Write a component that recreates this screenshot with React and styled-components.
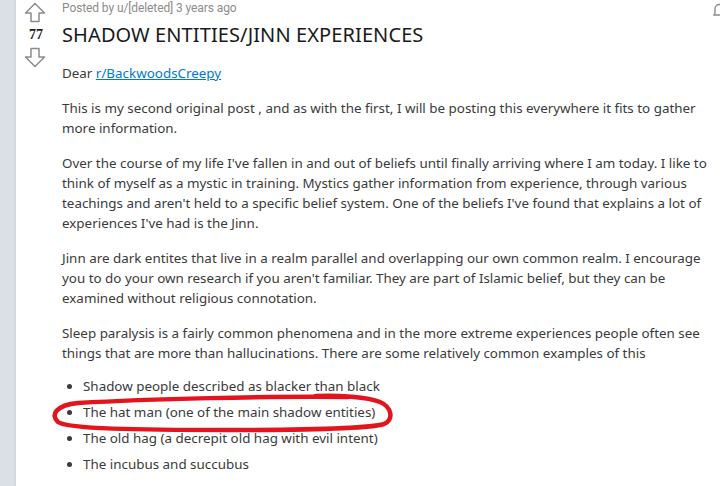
import styled, { createGlobalStyle } from "styled-components"

const GlobalStyle = createGlobalStyle`
    body {
        margin: 0;
        background: #ffffff;
        overflow: hidden;
    }
`

const Page = styled.div`
    display: flex;
    width: 720px;
    height: 486px;
    position: relative;
    overflow: hidden;
    background: #fff;
`
const Strip = styled.div`
    width: 14px;
    flex-shrink: 0;
    background: #dae0e6;
    border-right: 2px solid #d3d9e0;
`
const VoteCol = styled.div`
    width: 46px;
    flex-shrink: 0;
    display: flex;
    flex-direction: column;
    align-items: center;
    padding-top: 2px;
    box-sizing: border-box;
    padding-right: 8px;
`
const Count = styled.div`
    font-family: "Liberation Serif", serif;
    font-weight: 700;
    font-size: 14px;
    line-height: 24px;
    height: 24px;
    color: #1c1c1c;
    padding-left: 2px;
`
const Content = styled.div`
    flex: 1;
    padding-right: 6px;
`
const Meta = styled.div`
    font-family: Roboto, "Liberation Sans", sans-serif;
    font-size: 12px;
    line-height: 16px;
    color: #8c8c8c;
    letter-spacing: -0.1px;
`
const Title = styled.h1`
    margin: 6px 0 15px;
    font-family: "Noto Sans", sans-serif;
    font-weight: 400;
    font-size: 20px;
    line-height: 26px;
    color: #1a1a1b;
    letter-spacing: 0.1px;
`
const Body = styled.div`
    font-family: "Noto Sans", sans-serif;
    font-size: 13.4px;
    line-height: 20px;
    color: #3a3a3a;
`
const Para = styled.p`
    margin: 0 0 15px;
`
const Link = styled.a`
    color: #0079d3;
    text-decoration: underline;
`
const List = styled.ul`
    position: relative;
    margin: 0;
    padding-left: 21px;
    margin-top: -5px;
`
const Item = styled.li`
    padding: 3px 0;
`
const Circle = styled.svg`
    position: absolute;
    left: -14px;
    top: 18px;
    pointer-events: none;
`
const Bell = styled.svg`
    position: absolute;
    top: 2px;
    left: 711px;
`

const Arrow = ({ down }) => (
    <svg width="22" height="21" viewBox="0 0 22 21" style={down ? { transform: "rotate(180deg)" } : undefined}>
        <path d="M11 1.5 L20.5 11 L15 11 L15 19.5 L7 19.5 L7 11 L1.5 11 Z"
            fill="none" stroke="#8a8c8e" strokeWidth="1.5" strokeLinejoin="round" />
    </svg>
)

const App = () => {
    return (
        <Page>
            <GlobalStyle />
            <Strip />
            <VoteCol>
                <Arrow />
                <Count>77</Count>
                <Arrow down />
            </VoteCol>
            <Content>
                <Meta>Posted by u/[deleted] 3 years ago</Meta>
                <Title>SHADOW ENTITIES/JINN EXPERIENCES</Title>
                <Body>
                    <Para>Dear <Link href="#">r/BackwoodsCreepy</Link></Para>
                    <Para>This is my second original post , and as with the first, I will be posting this everywhere it fits to gather more information.</Para>
                    <Para>Over the course of my life I've fallen in and out of beliefs until finally arriving where I am today. I like to think of myself as a mystic in training. Mystics gather information from experience, through various teachings and aren't held to a specific belief system. One of the beliefs I've found that explains a lot of experiences I've had is the Jinn.</Para>
                    <Para>Jinn are dark entites that live in a realm parallel and overlapping our own common realm. I encourage you to do your own research if you aren't familiar. They are part of Islamic belief, but they can be examined without religious connotation.</Para>
                    <Para>Sleep paralysis is a fairly common phenomena and in the more extreme experiences people often see things that are more than hallucinations. There are some relatively common examples of this</Para>
                    <List>
                        <Item>Shadow people described as blacker than black</Item>
                        <Item>The hat man (one of the main shadow entities)</Item>
                        <Item>The old hag (a decrepit old hag with evil intent)</Item>
                        <Item>The incubus and succubus</Item>
                        <Circle width="352" height="46" viewBox="0 0 352 46">
                            <path d="M300 6 C220 5, 100 8, 30 12 C8 14, 2 24, 10 31 C20 38, 90 39, 180 39 C260 39, 320 38, 336 33 C346 29, 344 16, 332 11 C320 6, 290 4, 268 5"
                                fill="none" stroke="#e3141c" strokeWidth="4.5" strokeLinecap="round" />
                        </Circle>
                    </List>
                </Body>
            </Content>
            <Bell width="16" height="16" viewBox="0 0 16 16">
                <path d="M3 13 L4 11 L4 7 C4 4 6 2.5 8 2.5 C10 2.5 12 4 12 7 L12 11 L13 13 Z" fill="none" stroke="#8a8c8e" strokeWidth="1.4" />
            </Bell>
        </Page>
    )
}

export default App
